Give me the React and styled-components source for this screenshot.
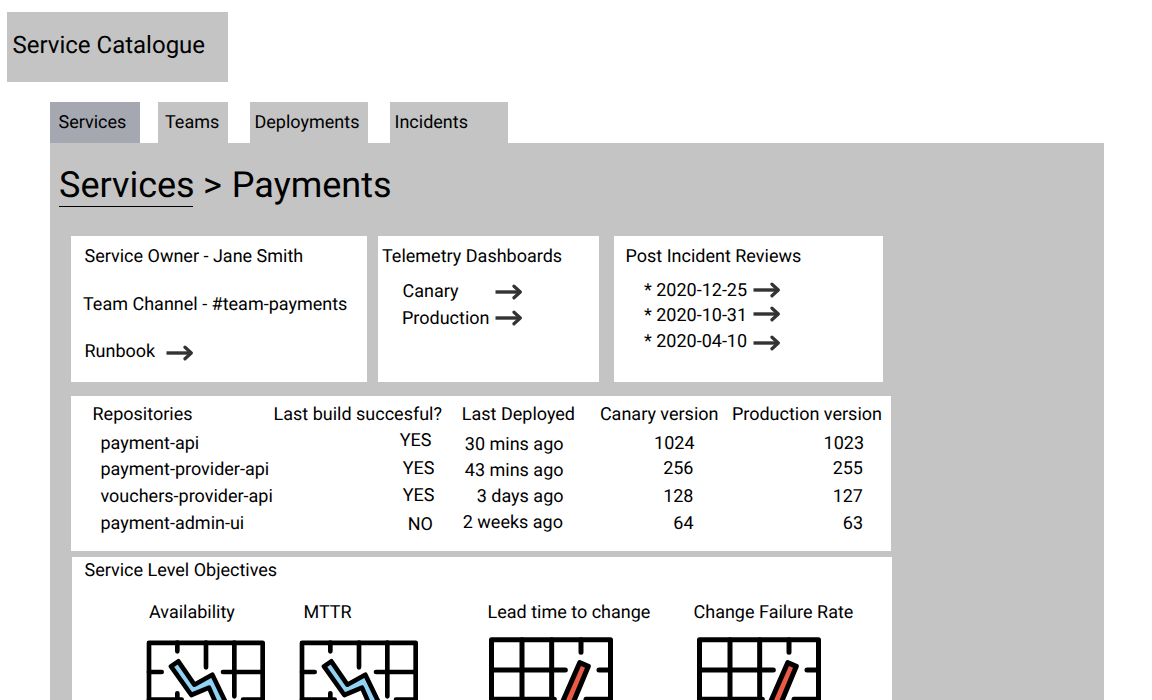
import React from 'react';
import styled, { createGlobalStyle } from 'styled-components';

const GlobalStyle = createGlobalStyle`
  *, *::before, *::after { box-sizing: border-box; }
  body { margin: 0; background: #fff; }
`;

const Page = styled.div`
  width: 1152px;
  height: 700px;
  overflow: hidden;
  background: #fff;
  color: #000;
  font-family: Roboto, sans-serif;
  font-size: 18px;
  line-height: 23px;
  white-space: nowrap;
  text-rendering: geometricPrecision;
  padding-top: 12px;
`;

const Brand = styled.header`
  width: 221px;
  height: 70px;
  margin-left: 7px;
  padding: 19px 0 0 5.5px;
  background: #c4c4c4;
  font-size: 24px;
  line-height: 28px;
`;

const Tabs = styled.nav`
  display: grid;
  grid-template-columns: 90px 18px 70px 22px 118px 22px 118px;
  margin: 20px 0 0 50px;
  height: 41px;
`;

const Tab = styled.a`
  grid-column: ${(p) => p.$column};
  padding: 9px 0 0 ${(p) => p.$inset}px;
  background: ${(p) => (p.$active ? '#a5a8b0' : '#c4c4c4')};
`;

const Content = styled.main`
  width: 1054px;
  height: 700px;
  margin-left: 50px;
  padding: 21px 0 0 9px;
  background: #c4c4c4;
`;

const Breadcrumb = styled.h1`
  display: flex;
  gap: 10px;
  height: 43px;
  margin: 0;
  font-size: 36px;
  font-weight: 400;
  line-height: 42px;
`;

const Crumb = styled.a`
  width: ${(p) => p.$width || 'auto'};
  border-bottom: ${(p) => (p.$linked ? '1px solid #000' : '0')};
`;

const Cards = styled.div`
  display: flex;
  margin: 29px 0 0 12px;
`;

const Card = styled.section`
  width: ${(p) => p.$width}px;
  height: 146px;
  margin-right: ${(p) => p.$after}px;
  padding-top: 9px;
  background: #fff;
`;

const Label = styled.div`
  display: flex;
  height: 21px;
  margin-top: ${(p) => p.$top || 0}px;
  padding-left: ${(p) => p.$left || 0}px;
`;

const LinkText = styled.span`
  width: ${(p) => p.$width}px;
`;

const ArrowIcon = styled.svg`
  display: block;
  flex: none;
  width: 28px;
  height: 16px;
  margin-top: ${(p) => p.$top}px;
`;

const Repositories = styled.section`
  display: grid;
  grid-template-columns: 202px 169px 134px 143px 172px;
  width: 820px;
  height: 155px;
  margin: 14px 0 0 12px;
  padding-top: 7px;
  background: #fff;
`;

const Column = styled.div`
  display: flex;
  flex-direction: column;
  align-items: ${(p) => (p.$end ? 'flex-end' : 'flex-start')};
`;

const Cell = styled.div`
  height: 21px;
  margin-top: ${(p) => p.$top}px;
  padding-left: ${(p) => p.$left || 0}px;
  padding-right: ${(p) => p.$right || 0}px;
`;

const Objectives = styled.section`
  width: 820px;
  height: 300px;
  margin: 6px 0 0 13px;
  padding-top: 2px;
  background: #fff;
`;

const Metrics = styled.div`
  display: grid;
  grid-template-columns: 153px 190px 208px 195px;
  margin: 21px 0 0 74px;
`;

const Metric = styled.figure`
  margin: 0;
`;

const MetricName = styled.figcaption`
  height: 21px;
  margin-left: ${(p) => p.$left}px;
`;

const Chart = styled.svg`
  display: block;
  width: ${(p) => p.$width}px;
  height: 100px;
  margin-top: ${(p) => p.$top}px;
  fill: none;
  stroke: #000;
  stroke-width: ${(p) => p.$stroke};
  stroke-linecap: round;
  stroke-linejoin: round;
`;

function Arrow({ top = 2 }) {
  return (
    <ArrowIcon $top={top} viewBox="0 0 28 16" fill="none" stroke="#333" strokeWidth="3.4">
      <path d="M.5 8H25" />
      <path d="M19 2.2 25.3 8 19 13.8" strokeLinecap="round" strokeLinejoin="round" strokeWidth="3.2" />
    </ArrowIcon>
  );
}

function FallingChart() {
  return (
    <Chart $width={119} $top={18} $stroke={14} viewBox="18 30 357 300">
      <path d="M27 38.5H368V360H27Z" />
      <path d="M112 38V64M198 38V112M283 38V199M27 126H65M249 126H368M27 209H125M309 209H368M112 190V350" />
      <path
        d="M93 109 115 94 163 164 217 134 280 265 252 275 207 173 154 195Z"
        fill="#92d3f5"
      />
    </Chart>
  );
}

function RisingChart() {
  return (
    <Chart $width={124} $top={15} $stroke={15} viewBox="27 21 372 300">
      <path d="M34.5 29.5H391.5V360H34.5Z" />
      <path d="M126 29V360M215 29V207M303 29V67M34 120H256M357 120H391M34 208H223M318 208H391" />
      <path d="M299 98 325 109 277 224 244 224Z" fill="#ea5a47" />
    </Chart>
  );
}

const tabs = [
  { name: 'Services', column: 1, inset: 8.5, active: true },
  { name: 'Teams', column: 3, inset: 7 },
  { name: 'Deployments', column: 5, inset: 4.5 },
  { name: 'Incidents', column: 7, inset: 4.5 },
];

const dashboards = [
  { name: 'Canary', top: 14, left: 24.5, width: 92.5, arrow: 4 },
  { name: 'Production', top: 6, left: 24, width: 93, arrow: 3 },
];

const reviews = [
  { name: '* 2020-12-25', top: 13, arrow: 3 },
  { name: '* 2020-10-31', top: 4, arrow: 2 },
  { name: '* 2020-04-10', top: 5, arrow: 5 },
];

const columns = [
  {
    cells: [
      ['Repositories', 0, 21.5],
      ['payment-api', 8, 29.5],
      ['payment-provider-api', 5, 29.5],
      ['vouchers-provider-api', 6, 29.5],
      ['payment-admin-ui', 6, 29.5],
    ],
  },
  {
    end: true,
    cells: [
      ['Last build succesful?', 0, 0],
      ['YES', 5, 10.5],
      ['YES', 7, 7.5],
      ['YES', 6, 7.5],
      ['NO', 8, 9],
    ],
  },
  {
    end: true,
    cells: [
      ['Last Deployed', 0, 1],
      ['30 mins ago', 9, 12.5],
      ['43 mins ago', 5, 12.5],
      ['3 days ago', 5, 12.5],
      ['2 weeks ago', 5, 13],
    ],
  },
  {
    end: true,
    cells: [
      ['Canary version', 0, 0.5],
      ['1024', 8, 24.5],
      ['256', 4, 25.5],
      ['128', 7, 25.5],
      ['64', 6, 25.5],
    ],
  },
  {
    end: true,
    cells: [
      ['Production version', 0, 9],
      ['1023', 8, 27],
      ['255', 4, 28],
      ['127', 7, 28],
      ['63', 6, 28],
    ],
  },
];

const metrics = [
  { name: 'Availability', left: 3, chart: FallingChart },
  { name: 'MTTR', left: 4.5, chart: FallingChart },
  { name: 'Lead time to change', left: -1.5, chart: RisingChart },
  { name: 'Change Failure Rate', left: -3.5, chart: RisingChart },
];

export default function App() {
  return (
    <Page>
      <GlobalStyle />
      <Brand>Service Catalogue</Brand>
      <Tabs>
        {tabs.map((t) => (
          <Tab key={t.name} $column={t.column} $inset={t.inset} $active={t.active}>
            {t.name}
          </Tab>
        ))}
      </Tabs>
      <Content>
        <Breadcrumb>
          <Crumb $linked $width="134px">Services</Crumb>
          <Crumb as="span">&gt;</Crumb>
          <Crumb as="span">Payments</Crumb>
        </Breadcrumb>
        <Cards>
          <Card $width={296} $after={11}>
            <Label $left={13.5}>Service Owner - Jane Smith</Label>
            <Label $left={12} $top={27}>Team Channel - #team-payments</Label>
            <Label $left={13.5} $top={26}>
              <LinkText $width={81.5}>Runbook</LinkText>
              <Arrow top={5} />
            </Label>
          </Card>
          <Card $width={221} $after={15}>
            <Label $left={4}>Telemetry Dashboards</Label>
            {dashboards.map((d) => (
              <Label key={d.name} $top={d.top} $left={d.left}>
                <LinkText $width={d.width}>{d.name}</LinkText>
                <Arrow top={d.arrow} />
              </Label>
            ))}
          </Card>
          <Card $width={269} $after={0}>
            <Label $left={11.5}>Post Incident Reviews</Label>
            {reviews.map((r) => (
              <Label key={r.name} $top={r.top} $left={30}>
                <LinkText $width={109}>{r.name}</LinkText>
                <Arrow top={r.arrow} />
              </Label>
            ))}
          </Card>
        </Cards>
        <Repositories>
          {columns.map((c) => (
            <Column key={c.cells[0][0]} $end={c.end}>
              {c.cells.map(([text, top, inset], i) => (
                <Cell
                  key={i}
                  $top={top}
                  $left={c.end ? 0 : inset}
                  $right={c.end ? inset : 0}
                >
                  {text}
                </Cell>
              ))}
            </Column>
          ))}
        </Repositories>
        <Objectives>
          <Label $left={12.5}>Service Level Objectives</Label>
          <Metrics>
            {metrics.map(({ name, left, chart: MetricChart }) => (
              <Metric key={name}>
                <MetricName $left={left}>{name}</MetricName>
                <MetricChart />
              </Metric>
            ))}
          </Metrics>
        </Objectives>
      </Content>
    </Page>
  );
}
